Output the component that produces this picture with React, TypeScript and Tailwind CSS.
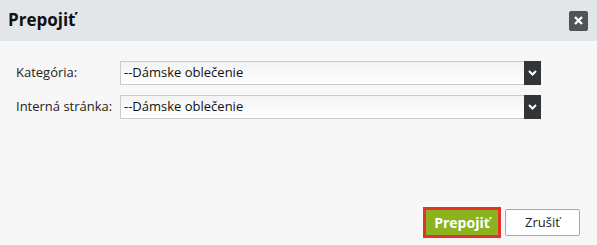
const options = ["--Dámske oblečenie"];

const Field = ({ label }: { label: string }) => (
  <div className="flex items-center h-[24px]">
    <label className="w-[104px] shrink-0 text-[13px] text-[#222]">{label}</label>
    <div className="flex h-[24px] w-[421px] border border-[#cbcbcb] bg-gradient-to-b from-[#f3f3f3] to-white">
      <div className="flex-1 flex items-center pl-[3px] text-[13px] text-[#111]">{options[0]}</div>
      <div className="w-[17px] h-[24px] -mt-px -mr-px bg-[#313537] flex items-center justify-center">
        <svg width="9" height="6" viewBox="0 0 9 6">
          <path d="M1 1l3.5 3.5L8 1" stroke="white" strokeWidth="2" fill="none" />
        </svg>
      </div>
    </div>
  </div>
);

export default function App() {
  return (
    <div className="w-[597px] h-[245px] flex flex-col bg-[#f7f7f7] font-['Open_Sans',sans-serif]">
      <div className="h-[41px] shrink-0 bg-[#e3e6e9] flex items-center justify-between pl-[8px] pr-[9px]">
        <h1 className="text-[17px] font-bold text-[#111] -mt-[1px]">Prepojiť</h1>
        <button className="w-[19px] h-[20px] rounded-[2px] bg-[#4f5458] flex items-center justify-center">
          <svg width="9" height="9" viewBox="0 0 9 9">
            <path d="M1 1l7 7M8 1l-7 7" stroke="white" strokeWidth="2.4" />
          </svg>
        </button>
      </div>
      <div className="flex-1 flex flex-col pl-[16px] pt-[20px] gap-[10px]">
        <Field label="Kategória:" />
        <Field label="Interná stránka:" />
      </div>
      <div className="flex justify-end gap-[4px] pr-[17px] pb-[7px]">
        <button className="h-[31px] w-[78px] border-[3px] border-[#e8302a] bg-[#8ab31f] text-white font-bold text-[14px]">
          Prepojiť
        </button>
        <button className="h-[27px] w-[75px] mt-[2px] border border-[#a5a8ad] rounded-[2px] bg-white text-[#222] text-[13px]">
          Zrušiť
        </button>
      </div>
    </div>
  );
}
